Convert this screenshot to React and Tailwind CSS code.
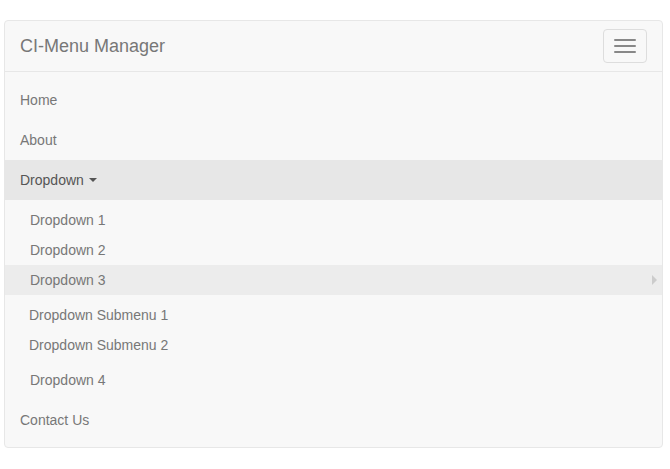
export default function App() {
  const font = { fontFamily: '"Liberation Sans", Arial, sans-serif' };
  return (
    <div className="bg-white min-h-[469px] pt-5 pl-1 pr-2" style={font}>
      <div className="w-[659px] bg-[#f8f8f8] border border-[#e7e7e7] rounded-[4px]">
        <div className="flex items-start justify-between h-[50px] pl-[15px] pr-[15px]">
          <span className="text-[18px] leading-[20px] py-[15px] text-[#777]">CI-Menu Manager</span>
          <button className="mt-2 w-[44px] h-[34px] border border-[#ddd] rounded-[4px] flex flex-col items-center justify-center gap-[4px]">
            <span className="block w-[22px] h-[2px] bg-[#888] rounded-[1px]" />
            <span className="block w-[22px] h-[2px] bg-[#888] rounded-[1px]" />
            <span className="block w-[22px] h-[2px] bg-[#888] rounded-[1px]" />
          </button>
        </div>
        <div className="border-t border-[#e7e7e7] py-[7.5px] text-[14px] leading-[20px] text-[#777]">
          <div className="px-[15px] py-[10px]">Home</div>
          <div className="px-[15px] py-[10px]">About</div>
          <div className="px-[15px] py-[10px] bg-[#e7e7e7] text-[#555] flex items-center">
            Dropdown
            <span className="ml-[5px] w-0 h-0 border-x-[4px] border-x-transparent border-t-[4px] border-t-[#555]" />
          </div>
          <div className="py-[5px]">
            <div className="pl-[25px] pr-[15px] py-[5px]">Dropdown 1</div>
            <div className="pl-[25px] pr-[15px] py-[5px]">Dropdown 2</div>
            <div className="pl-[25px] pr-[5px] py-[5px] bg-[#ececec] flex items-center justify-between">
              <span>Dropdown 3</span>
              <span className="w-0 h-0 border-y-[5px] border-y-transparent border-l-[5px] border-l-[#ccc]" />
            </div>
            <div className="py-[5px]">
              <div className="pl-[24px] pr-[15px] py-[5px]">Dropdown Submenu 1</div>
              <div className="pl-[24px] pr-[15px] py-[5px]">Dropdown Submenu 2</div>
            </div>
            <div className="pl-[25px] pr-[15px] py-[5px]">Dropdown 4</div>
          </div>
          <div className="px-[15px] py-[10px]">Contact Us</div>
        </div>
      </div>
    </div>
  );
}
